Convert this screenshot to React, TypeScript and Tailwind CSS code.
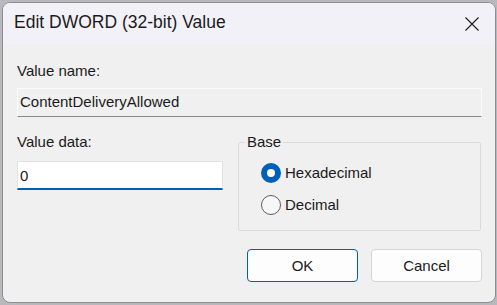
import { useState } from "react";

const font = { fontFamily: '"Liberation Sans", Arial, sans-serif' };

const Radio = ({ label, checked, onSelect }: { label: string; checked: boolean; onSelect: () => void }) => (
  <button type="button" className="flex h-[20px] items-center gap-[4px] text-left" onClick={onSelect}>
    {checked ? (
      <span className="flex h-[20px] w-[20px] items-center justify-center rounded-full bg-[#005fb8]">
        <span className="h-[8px] w-[8px] rounded-full bg-white" />
      </span>
    ) : (
      <span className="h-[20px] w-[20px] rounded-full border border-[#5c5c5c] bg-[#f7f7f7]" />
    )}
    <span className="text-[15px] leading-[18px] text-[#1b1b1b]">{label}</span>
  </button>
);

const App = () => {
  const [base, setBase] = useState<"hex" | "dec">("hex");
  const [data, setData] = useState("0");

  return (
    <div className="h-[305px] w-[497px] bg-[#b9b9bd] pl-[2px] pt-[2px]" style={font}>
      <div className="flex h-[301px] w-[494px] flex-col overflow-hidden rounded-[8px] border border-[#8e8e8e] bg-[#f0f0f0]">
        <div className="flex h-[41px] shrink-0 items-start justify-between bg-[#f3f1f8]">
          <h1 className="pl-[11px] pt-[9px] text-[17.5px] leading-[20px] text-[#1b1b1b]">Edit DWORD (32-bit) Value</h1>
          <button type="button" className="mr-[16px] mt-[14px] p-0" aria-label="Close">
            <svg width="14" height="14" viewBox="0 0 14 14" fill="none" stroke="#1b1b1b" strokeWidth="1.1">
              <path d="M0.5 0.5L13.5 13.5M13.5 0.5L0.5 13.5" />
            </svg>
          </button>
        </div>

        <div className="flex flex-1 flex-col pl-[14px] pr-[13px] pt-[18px] text-[15px] leading-[18px] text-[#1b1b1b]">
          <p>Value name:</p>
          <div className="mt-[8px] h-[29px] border border-[#fbfbfb] border-b-[#8a8a8a] bg-[#f0f0f0] pl-[2px] pt-[4px]">
            ContentDeliveryAllowed
          </div>

          <div className="mt-[16px] flex items-start gap-[15px]">
            <div className="flex w-[206px] flex-col">
              <label htmlFor="value-data">Value data:</label>
              <input
                id="value-data"
                value={data}
                onChange={(event) => setData(event.target.value)}
                className="mt-[10px] h-[29px] border border-[#e2e2e2] border-b-2 border-b-[#005fb8] bg-white pl-[2px] pt-[1px] text-[15px] text-[#1b1b1b] outline-none"
              />
            </div>

            <fieldset className="flex w-[243px] flex-col rounded-[2px] border border-[#dadada] px-[22px] pb-[15px] pt-[12px]">
              <legend className="-ml-[16px] px-[2px] text-[15px] leading-[18px]">Base</legend>
              <div className="flex flex-col gap-[12px]">
                <Radio label="Hexadecimal" checked={base === "hex"} onSelect={() => setBase("hex")} />
                <Radio label="Decimal" checked={base === "dec"} onSelect={() => setBase("dec")} />
              </div>
            </fieldset>
          </div>

          <div className="mt-[18px] flex justify-end gap-[13px]">
            <button type="button" className="h-[33px] w-[111px] rounded-[4px] border border-[#005fb8] bg-[#fdfdfd] text-[15px] text-[#1b1b1b]">
              OK
            </button>
            <button type="button" className="h-[33px] w-[111px] rounded-[4px] border border-[#d5d5d5] bg-[#fdfdfd] text-[15px] text-[#1b1b1b]">
              Cancel
            </button>
          </div>
        </div>
      </div>
    </div>
  );
};

export default App;
